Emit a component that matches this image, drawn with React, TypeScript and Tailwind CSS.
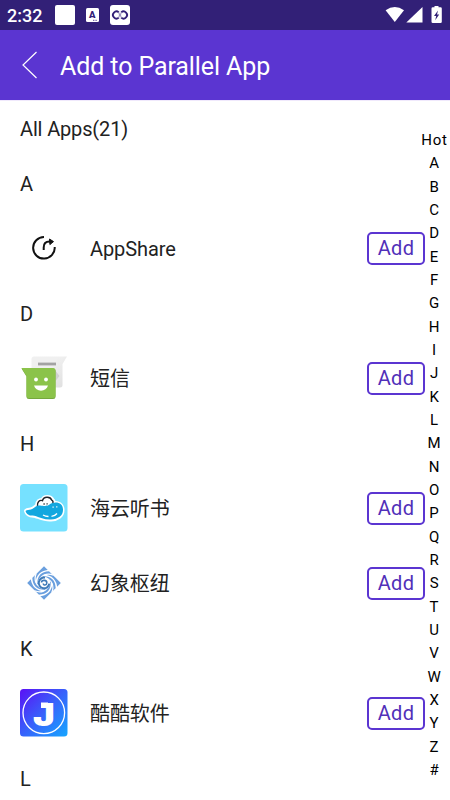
import React from "react";

function AppShareIcon() {
  return (
    <svg className="h-12 w-12" viewBox="0 0 48 48" fill="none">
      <path
        d="M24 13A10.8 10.8 0 1 0 34.700 23"
        stroke="#111"
        strokeWidth="2"
      />
      <path
        d="M23.700 26v-2.600c0-3.600 2-5.900 5.800-5.900h1"
        stroke="#111"
        strokeWidth="2"
      />
      <path d="M29.500 15l4 2.600-3.600 3z" fill="#111" stroke="#111" />
    </svg>
  );
}

function MessageIcon() {
  return (
    <svg className="h-12 w-12" viewBox="0 -1 48 48">
      <defs>
        <linearGradient id="bubble" x1="0" y1="0" x2="1" y2="1">
          <stop offset="0.4" stopColor="#f0f0f0" />
          <stop offset="1" stopColor="#dedede" />
        </linearGradient>
      </defs>
      <path
        d="M14 1.500h33l-4.500 7.500v21a2.500 2.500 0 0 1-2.500 2.500H14a2.500 2.500 0 0 1-2.500-2.500V4A2.500 2.500 0 0 1 14 1.500z"
        fill="url(#bubble)"
      />
      <path d="M34.500 14.500l5 6.500-4 5z" fill="#d0d0d0" />
      <path d="M18 7.600h18v2.800H18z" fill="#a3a3a3" />
      <path
        d="M1.500 13.500H33a2.500 2.500 0 0 1 2.500 2.500v25.500a2.500 2.500 0 0 1-2.500 2.500H9a2.500 2.500 0 0 1-2.500-2.500V21.500z"
        fill="#75a83d"
      />
      <path
        d="M1.500 13H33a2.500 2.500 0 0 1 2.500 2.500v25a2.500 2.500 0 0 1-2.500 2.500H9a2.500 2.500 0 0 1-2.500-2.500V21z"
        fill="#8bc34a"
      />
      <circle cx="16" cy="24.500" r="1.900" fill="#fff" />
      <circle cx="26" cy="24.500" r="1.900" fill="#fff" />
      <path d="M14 30.500h14c-1 3.400-3.600 5.200-7 5.200s-6-1.800-7-5.200z" fill="#fff" />
    </svg>
  );
}

function CloudIcon() {
  return (
    <svg className="h-12 w-12" viewBox="0 0 48 48" fill="none">
      <rect width="47.500" height="47.500" rx="3.500" fill="#76e1ff" />
      <path
        d="M6 27c1.500-1.500 3.500-1 5-1.500 3-1 4-2.500 6-4 0-4 3-6 5.500-5.500 1.500-4 8-4 10 0 1.500 1 1 2.500.5 3.500 5-2 9.500 1.500 9.500 6.500 0 6-5 9-11.500 9.500-6 .5-11-2-15.500-3.500-3-.5-8 .5-9.500-5z"
        fill="#fff"
        stroke="#fff"
        strokeWidth="4"
        strokeLinejoin="round"
      />
      <path
        d="M17.500 22c-.5-3.500 2-6.500 5-5.300 1-4.500 7.800-4.700 9.300-.5 1.800.7 1.300 2.600.6 3.600"
        stroke="#20252b"
        strokeWidth="1.400"
      />
      <path
        d="M5.500 27c1.500-1.500 3.500-1 5.500-1.500 4-1.500 4.500-4.500 9-4 4.500.5 6.500 1 9.500-1 5.500-3.500 13.500-2.500 13.500 5.500 0 6-5 9-12 9.500-6 .5-11-2-15.500-3.500-3-.5-8.500.5-10-5z"
        fill="#12a7df"
      />
      <path
        d="M23 31c2 1.200 3.500 1.500 5.500 1.500M31.500 32.300c2.400-.2 4.500-1.500 5.500-2.800"
        stroke="#fff"
        strokeWidth="1.300"
      />
      <path d="M32.500 23.200h1.200M36.200 22.800h1.200" stroke="#fff" strokeWidth="1.300" />
      <path d="M23.500 20h1.200M26.500 19.800h1.200" stroke="#20252b" strokeWidth="1.300" />
    </svg>
  );
}

const blades = [0, 90, 180, 270];

function SwirlIcon() {
  return (
    <svg className="h-12 w-12" viewBox="0 0 48 48" fill="none">
      <path d="M24 7.200L40.800 24 24 40.800 7.200 24z" fill="#6a9fde" />
      {blades.map((angle) => (
        <g key={angle} transform={`rotate(${angle} 24 24)`}>
          <path d="M29 11.500C21.500 12 16.500 16.500 16.500 24" stroke="#fff" strokeWidth="1.600" />
          <path d="M33.500 16.200C27 13.500 20.500 16 19.500 22.500" stroke="#fff" strokeWidth="1.200" />
          <path d="M28.500 10.500l6.500 6.500 1-6z" fill="#fff" />
        </g>
      ))}
      <circle cx="24" cy="24" r="6.200" fill="#fff" />
      <path
        d="M25 18.700a5.300 5.300 0 1 0 4.300 6"
        stroke="#3f7bb8"
        strokeWidth="2"
      />
      <path d="M21.500 23.500c.3-3 5.500-2.800 5.300.5-.2 2.500-3.500 2.800-3.500.5" stroke="#3f7bb8" strokeWidth="1.600" />
    </svg>
  );
}

function KukuIcon() {
  return (
    <svg className="h-12 w-12" viewBox="0 0 48 48">
      <defs>
        <linearGradient id="kuku" x1="0" y1="0" x2="1" y2="1">
          <stop offset="0" stopColor="#5b10f5" />
          <stop offset="0.500" stopColor="#3762fb" />
          <stop offset="1" stopColor="#16a6ff" />
        </linearGradient>
      </defs>
      <rect width="47.500" height="47.500" rx="3.500" fill="url(#kuku)" />
      <circle cx="23.800" cy="23.800" r="20.800" fill="none" stroke="#fff" strokeWidth="1.300" />
      <path d="M21 13.500h7v5.500h-7z" fill="#fff" />
      <text
        transform="translate(23.800 36.500) scale(1.160 1)"
        textAnchor="middle"
        fontFamily="Inter, sans-serif"
        fontSize="31.500"
        fontWeight="900"
        fill="#fff"
      >
        J
      </text>
    </svg>
  );
}

const sections = [
  { letter: "A", apps: [{ name: "AppShare", icon: <AppShareIcon /> }] },
  { letter: "D", apps: [{ name: "短信", icon: <MessageIcon /> }] },
  {
    letter: "H",
    apps: [
      { name: "海云听书", icon: <CloudIcon /> },
      { name: "幻象枢纽", icon: <SwirlIcon /> },
    ],
  },
  { letter: "K", apps: [{ name: "酷酷软件", icon: <KukuIcon /> }] },
  { letter: "L", apps: [] },
];

const indexLetters = ["Hot", ..."ABCDEFGHIJKLMNOPQRSTUVWXYZ#"];

function StatusBar() {
  return (
    <div className="flex h-[30px] shrink-0 items-center bg-[#322077] pl-[7px] pr-[7px] text-white">
      <p className="w-[48px] pt-px text-[18px] font-medium leading-[30px]">2:32</p>
      <div className="h-5 w-5 rounded-[2px] bg-white" />
      <svg className="ml-[11px] h-[14px] w-[13px]" viewBox="0 0 13 14">
        <rect width="13" height="14" rx="1.500" fill="#fff" />
        <text x="6.300" y="10" textAnchor="middle" fontSize="9.500" fontWeight="900" fill="#322077">
          A
        </text>
        <path d="M7 12.300h4" stroke="#322077" strokeWidth="0.800" strokeDasharray="1 .6" />
      </svg>
      <svg className="ml-[11px] h-5 w-5" viewBox="0 0 20 20" fill="none">
        <rect width="20" height="20" rx="3" fill="#fff" />
        <path d="M8.800 7.400A3.500 3.500 0 1 0 8.800 12.600" stroke="#322077" strokeWidth="1.800" />
        <path d="M11.200 7.400A3.500 3.500 0 1 1 11.200 12.600" stroke="#322077" strokeWidth="1.800" />
        <path d="M8.800 7.400q1.400 2.600 0 5.200M11.200 7.400q-1.400 2.600 0 5.200" stroke="#8b82b5" />
      </svg>
      <svg className="ml-auto h-[18px] w-[58px]" viewBox="0 0 58 18" fill="#fff">
        <path d="M.6 4.200Q9.800-2.400 19 4.200L9.800 16z" />
        <path d="M37.500 1v15.500H21.300z" />
        <path d="M49.500 0h4v1.200h2a1.300 1.300 0 0 1 1.300 1.300v13.200a1.300 1.300 0 0 1-1.300 1.300h-7.700a1.300 1.300 0 0 1-1.300-1.300V2.500a1.300 1.300 0 0 1 1.300-1.300h1.700z" />
        <path d="M53 4.500l-4 5.600h2.200l-1 4.200 4-5.800H52z" fill="#322077" />
      </svg>
    </div>
  );
}

export default function App() {
  return (
    <div className="flex h-[800px] w-[450px] flex-col overflow-hidden bg-white font-[Roboto,'Noto_Sans_CJK_SC',sans-serif] text-[#222]">
      <StatusBar />
      <header className="flex h-[70px] shrink-0 items-center bg-[#5b35d1] text-white">
        <svg className="ml-[22px] h-7 w-4" viewBox="0 0 16 28" fill="none">
          <path d="M14.500 1L1 14l13.500 13" stroke="#fff" strokeWidth="1.200" />
        </svg>
        <h1 className="ml-[22px] pt-[3px] text-[25px] tracking-[-0.1px]">Add to Parallel App</h1>
      </header>
      <div className="flex flex-1 border-t border-[#f0e9fc]">
        <main className="w-[425px] pl-5">
          <p className="flex h-[55px] items-center text-[20px] tracking-[-0.15px]">All Apps(21)</p>
          {sections.map((section) => (
            <section key={section.letter}>
              <h2 className="flex h-[55px] items-center text-[20px]">{section.letter}</h2>
              {section.apps.map((app) => (
                <div key={app.name} className="flex h-[75px] items-center pb-px">
                  {app.icon}
                  <p className="ml-[22px] pt-[2px] text-[20px] tracking-[-0.1px]">{app.name}</p>
                  <button className="ml-auto flex h-[33px] w-[58px] items-center justify-center rounded-[5px] border-2 border-[#5b35d1] text-[20px] tracking-[0.3px] text-[#5130b9]">
                    Add
                  </button>
                </div>
              ))}
            </section>
          ))}
        </main>
        <nav className="flex w-[19px] flex-col items-center pt-[28px] text-[15px] tracking-[0.8px] text-black">
          {indexLetters.map((letter) => (
            <span key={letter} className="h-[23.33px] shrink-0 leading-[23.33px]">
              {letter}
            </span>
          ))}
        </nav>
      </div>
    </div>
  );
}
